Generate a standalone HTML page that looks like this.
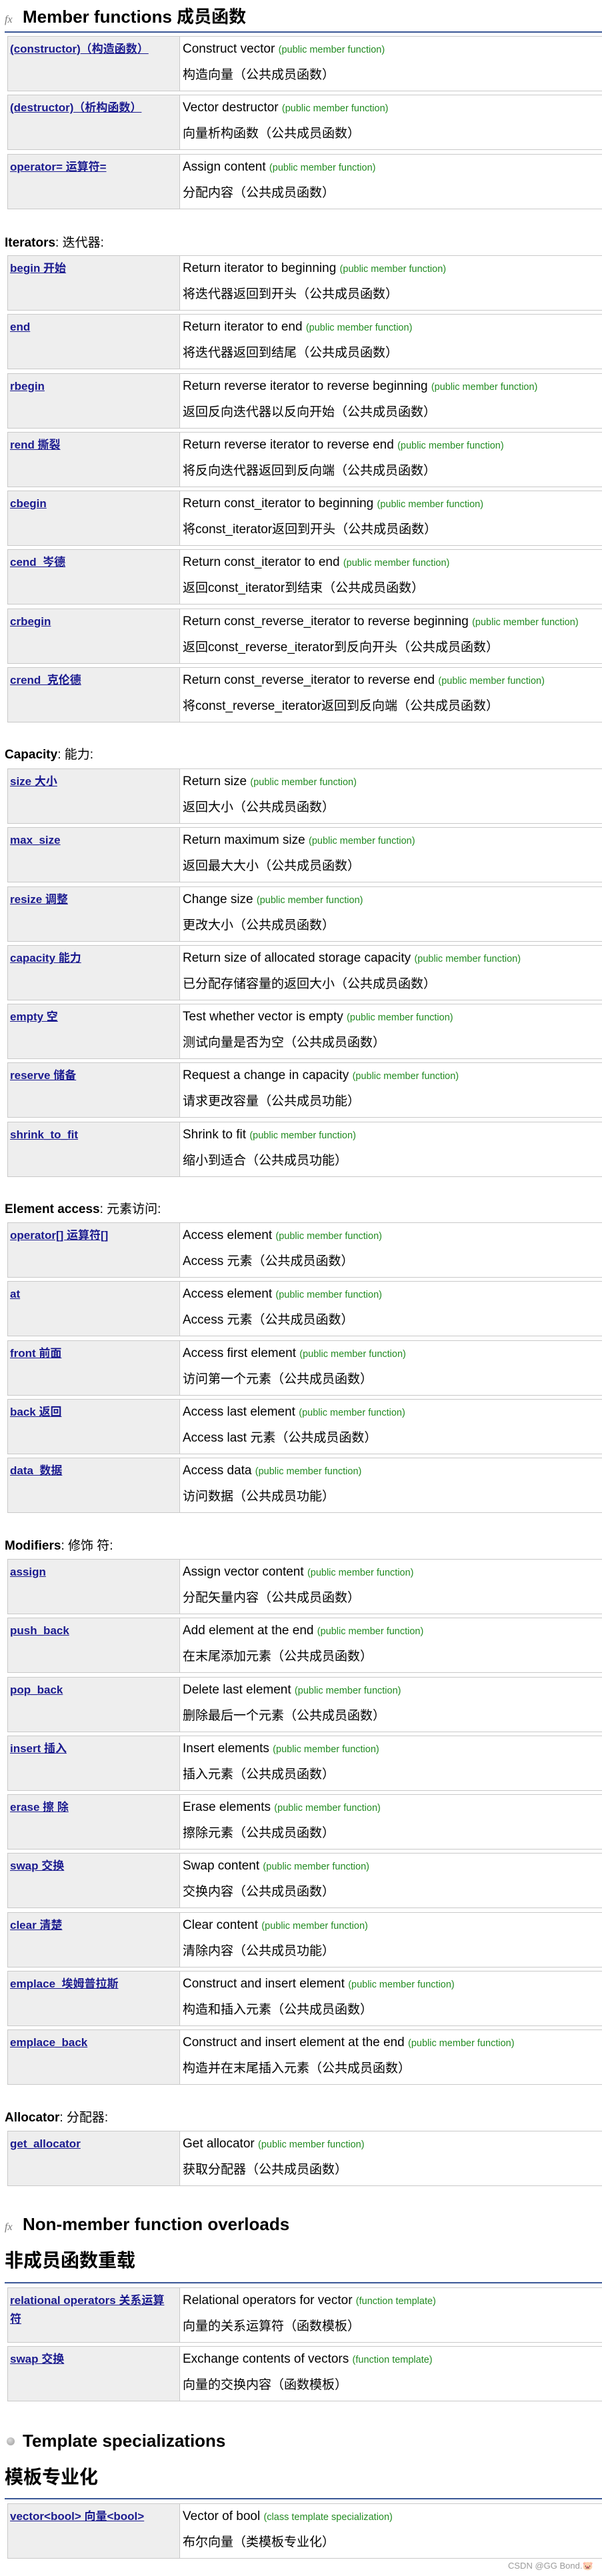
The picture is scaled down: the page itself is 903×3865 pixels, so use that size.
<!DOCTYPE html>
<html><head><meta charset="utf-8">
<style>
*{margin:0;padding:0}
html,body{width:903px;height:3865px;overflow:hidden;background:#fff}
body{position:relative;font-family:"Liberation Sans","Noto Sans CJK SC",sans-serif;color:#000}
.h{position:absolute;left:7px;font-weight:bold;font-size:26px;line-height:36px;white-space:nowrap}
.h .ic{display:inline-block;width:27px;font-family:"Liberation Serif",serif;font-style:italic;font-weight:normal;color:#777;font-size:16px}
.hz{position:absolute;left:7px;font-weight:bold;font-size:28px;line-height:40px;white-space:nowrap}
.bl{position:absolute;left:7px;width:896px;height:1px;background:#2b4a8c;border-top:1px solid #4a64a0}
.lab{position:absolute;left:7px;font-size:19px;line-height:24px;white-space:nowrap}
.lab b{font-weight:bold}
.t{position:absolute;left:11px;width:900px}
.r{height:83px;margin-bottom:5.3px;border:1.5px solid #c9c9c9;box-sizing:border-box;display:flex;overflow:hidden}
.l{width:258px;flex:none;background:#eee;border-right:1px solid #c9c9c9;padding:5px 6px 0 3px;box-sizing:border-box;font-weight:bold;font-size:17px;line-height:28px}
.l a{color:#1b1b8f;text-decoration:underline}
.d{padding-left:4px;font-size:19px;white-space:nowrap}
.d .a{height:38px;line-height:38px}
.d .b{height:40px;line-height:40px}
.g{color:#228b22;font-size:14.5px}
.wm{position:absolute;left:762px;top:3842px;font-size:13px;color:#9a9a9a;white-space:nowrap}
</style></head><body>

<div class="h" style="top:7px"><span class="ic">fx</span>Member functions 成员函数</div>
<div class="bl" style="top:47px"></div>
<div class="t" style="top:54px">
<div class="r"><div class="l"><a>(constructor)（构造函数）</a></div><div class="d"><div class="a">Construct vector <span class="g">(public member function)</span></div><div class="b">构造向量（公共成员函数）</div></div></div>
<div class="r"><div class="l"><a>(destructor)（析构函数）</a></div><div class="d"><div class="a">Vector destructor <span class="g">(public member function)</span></div><div class="b">向量析构函数（公共成员函数）</div></div></div>
<div class="r"><div class="l"><a>operator= 运算符=</a></div><div class="d"><div class="a">Assign content <span class="g">(public member function)</span></div><div class="b">分配内容（公共成员函数）</div></div></div>
</div>

<div class="lab" style="top:353px"><b>Iterators</b>: 迭代器:</div>
<div class="t" style="top:383px">
<div class="r"><div class="l"><a>begin 开始</a></div><div class="d"><div class="a">Return iterator to beginning <span class="g">(public member function)</span></div><div class="b">将迭代器返回到开头（公共成员函数）</div></div></div>
<div class="r"><div class="l"><a>end</a></div><div class="d"><div class="a">Return iterator to end <span class="g">(public member function)</span></div><div class="b">将迭代器返回到结尾（公共成员函数）</div></div></div>
<div class="r"><div class="l"><a>rbegin</a></div><div class="d"><div class="a">Return reverse iterator to reverse beginning <span class="g">(public member function)</span></div><div class="b">返回反向迭代器以反向开始（公共成员函数）</div></div></div>
<div class="r"><div class="l"><a>rend 撕裂</a></div><div class="d"><div class="a">Return reverse iterator to reverse end <span class="g">(public member function)</span></div><div class="b">将反向迭代器返回到反向端（公共成员函数）</div></div></div>
<div class="r"><div class="l"><a>cbegin</a></div><div class="d"><div class="a">Return const_iterator to beginning <span class="g">(public member function)</span></div><div class="b">将const_iterator返回到开头（公共成员函数）</div></div></div>
<div class="r"><div class="l"><a>cend&nbsp; 岑德</a></div><div class="d"><div class="a">Return const_iterator to end <span class="g">(public member function)</span></div><div class="b">返回const_iterator到结束（公共成员函数）</div></div></div>
<div class="r"><div class="l"><a>crbegin</a></div><div class="d"><div class="a">Return const_reverse_iterator to reverse beginning <span class="g">(public member function)</span></div><div class="b">返回const_reverse_iterator到反向开头（公共成员函数）</div></div></div>
<div class="r"><div class="l"><a>crend&nbsp; 克伦德</a></div><div class="d"><div class="a">Return const_reverse_iterator to reverse end <span class="g">(public member function)</span></div><div class="b">将const_reverse_iterator返回到反向端（公共成员函数）</div></div></div>
</div>

<div class="lab" style="top:1121px"><b>Capacity</b>: 能力:</div>
<div class="t" style="top:1153px">
<div class="r"><div class="l"><a>size 大小</a></div><div class="d"><div class="a">Return size <span class="g">(public member function)</span></div><div class="b">返回大小（公共成员函数）</div></div></div>
<div class="r"><div class="l"><a>max_size</a></div><div class="d"><div class="a">Return maximum size <span class="g">(public member function)</span></div><div class="b">返回最大大小（公共成员函数）</div></div></div>
<div class="r"><div class="l"><a>resize 调整</a></div><div class="d"><div class="a">Change size <span class="g">(public member function)</span></div><div class="b">更改大小（公共成员函数）</div></div></div>
<div class="r"><div class="l"><a>capacity 能力</a></div><div class="d"><div class="a">Return size of allocated storage capacity <span class="g">(public member function)</span></div><div class="b">已分配存储容量的返回大小（公共成员函数）</div></div></div>
<div class="r"><div class="l"><a>empty 空</a></div><div class="d"><div class="a">Test whether vector is empty <span class="g">(public member function)</span></div><div class="b">测试向量是否为空（公共成员函数）</div></div></div>
<div class="r"><div class="l"><a>reserve 储备</a></div><div class="d"><div class="a">Request a change in capacity <span class="g">(public member function)</span></div><div class="b">请求更改容量（公共成员功能）</div></div></div>
<div class="r"><div class="l"><a>shrink_to_fit</a></div><div class="d"><div class="a">Shrink to fit <span class="g">(public member function)</span></div><div class="b">缩小到适合（公共成员功能）</div></div></div>
</div>

<div class="lab" style="top:1803px"><b>Element access</b>: 元素访问:</div>
<div class="t" style="top:1834px">
<div class="r"><div class="l"><a>operator[] 运算符[]</a></div><div class="d"><div class="a">Access element <span class="g">(public member function)</span></div><div class="b">Access 元素（公共成员函数）</div></div></div>
<div class="r"><div class="l"><a>at</a></div><div class="d"><div class="a">Access element <span class="g">(public member function)</span></div><div class="b">Access 元素（公共成员函数）</div></div></div>
<div class="r"><div class="l"><a>front 前面</a></div><div class="d"><div class="a">Access first element <span class="g">(public member function)</span></div><div class="b">访问第一个元素（公共成员函数）</div></div></div>
<div class="r"><div class="l"><a>back 返回</a></div><div class="d"><div class="a">Access last element <span class="g">(public member function)</span></div><div class="b">Access last 元素（公共成员函数）</div></div></div>
<div class="r"><div class="l"><a>data&nbsp; 数据</a></div><div class="d"><div class="a">Access data <span class="g">(public member function)</span></div><div class="b">访问数据（公共成员功能）</div></div></div>
</div>

<div class="lab" style="top:2308px"><b>Modifiers</b>: 修饰 符:</div>
<div class="t" style="top:2339px">
<div class="r"><div class="l"><a>assign</a></div><div class="d"><div class="a">Assign vector content <span class="g">(public member function)</span></div><div class="b">分配矢量内容（公共成员函数）</div></div></div>
<div class="r"><div class="l"><a>push_back</a></div><div class="d"><div class="a">Add element at the end <span class="g">(public member function)</span></div><div class="b">在末尾添加元素（公共成员函数）</div></div></div>
<div class="r"><div class="l"><a>pop_back</a></div><div class="d"><div class="a">Delete last element <span class="g">(public member function)</span></div><div class="b">删除最后一个元素（公共成员函数）</div></div></div>
<div class="r"><div class="l"><a>insert 插入</a></div><div class="d"><div class="a">Insert elements <span class="g">(public member function)</span></div><div class="b">插入元素（公共成员函数）</div></div></div>
<div class="r"><div class="l"><a>erase 擦 除</a></div><div class="d"><div class="a">Erase elements <span class="g">(public member function)</span></div><div class="b">擦除元素（公共成员函数）</div></div></div>
<div class="r"><div class="l"><a>swap 交换</a></div><div class="d"><div class="a">Swap content <span class="g">(public member function)</span></div><div class="b">交换内容（公共成员函数）</div></div></div>
<div class="r"><div class="l"><a>clear 清楚</a></div><div class="d"><div class="a">Clear content <span class="g">(public member function)</span></div><div class="b">清除内容（公共成员功能）</div></div></div>
<div class="r"><div class="l"><a>emplace&nbsp; 埃姆普拉斯</a></div><div class="d"><div class="a">Construct and insert element <span class="g">(public member function)</span></div><div class="b">构造和插入元素（公共成员函数）</div></div></div>
<div class="r"><div class="l"><a>emplace_back</a></div><div class="d"><div class="a">Construct and insert element at the end <span class="g">(public member function)</span></div><div class="b">构造并在末尾插入元素（公共成员函数）</div></div></div>
</div>

<div class="lab" style="top:3166px"><b>Allocator</b>: 分配器:</div>
<div class="t" style="top:3197px">
<div class="r"><div class="l"><a>get_allocator</a></div><div class="d"><div class="a">Get allocator <span class="g">(public member function)</span></div><div class="b">获取分配器（公共成员函数）</div></div></div>
</div>

<div class="h" style="top:3319px"><span class="ic">fx</span>Non-member function overloads</div>
<div class="hz" style="top:3372px">非成员函数重载</div>
<div class="bl" style="top:3424px"></div>
<div class="t" style="top:3432px">
<div class="r"><div class="l"><a>relational operators 关系运算符</a></div><div class="d"><div class="a">Relational operators for vector <span class="g">(function template)</span></div><div class="b">向量的关系运算符（函数模板）</div></div></div>
<div class="r"><div class="l"><a>swap 交换</a></div><div class="d"><div class="a">Exchange contents of vectors <span class="g">(function template)</span></div><div class="b">向量的交换内容（函数模板）</div></div></div>
</div>

<div class="h" style="top:3644px"><span class="ic"><span style="display:inline-block;width:12px;height:12px;border-radius:50%;background:radial-gradient(circle at 40% 35%,#ddd,#999);margin-left:3px;vertical-align:2px"></span></span>Template specializations</div>
<div class="hz" style="top:3697px">模板专业化</div>
<div class="bl" style="top:3748px"></div>
<div class="t" style="top:3756px">
<div class="r"><div class="l"><a>vector&lt;bool&gt; 向量&lt;bool&gt;</a></div><div class="d"><div class="a">Vector of bool <span class="g">(class template specialization)</span></div><div class="b">布尔向量（类模板专业化）</div></div></div>
</div>
<div class="wm">CSDN @GG Bond.🐷</div>
</body></html>
